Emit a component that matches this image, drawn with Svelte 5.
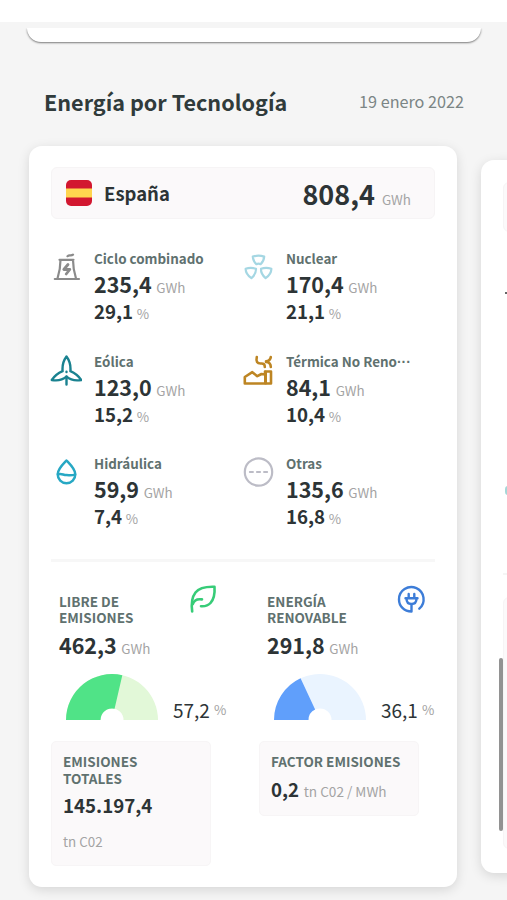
<script>
  const technologies = [
    { id: 'ciclo', name: 'Ciclo combinado', value: '235,4', share: '29,1' },
    { id: 'nuclear', name: 'Nuclear', value: '170,4', share: '21,1' },
    { id: 'eolica', name: 'Eólica', value: '123,0', share: '15,2' },
    { id: 'termica', name: 'Térmica No Reno', cut: true, value: '84,1', share: '10,4' },
    { id: 'hidraulica', name: 'Hidráulica', value: '59,9', share: '7,4' },
    { id: 'otras', name: 'Otras', value: '135,6', share: '16,8' }
  ];

  const summaries = [
    { id: 'libre', lines: ['LIBRE DE', 'EMISIONES'], value: '462,3', share: 57.2, color: '#50e387', track: '#e2f8d8' },
    { id: 'renovable', lines: ['ENERGÍA', 'RENOVABLE'], value: '291,8', share: 36.1, color: '#609ffb', track: '#eaf4ff' }
  ];

  // Half ring segment between two percentages, running left to right.
  function arc(from, to) {
    const point = (r, pct) => {
      const a = Math.PI * (1 - pct / 100);
      return `${(46 + r * Math.cos(a)).toFixed(2)} ${(46 - r * Math.sin(a)).toFixed(2)}`;
    };
    return `M${point(46, from)} A46 46 0 0 1 ${point(46, to)} L${point(11.5, to)} A11.5 11.5 0 0 0 ${point(11.5, from)} Z`;
  }

  const format = (n) => n.toFixed(1).replace('.', ',');
</script>

<div class="screen">
  <div class="status"></div>
  <div class="previous"></div>

  <header class="heading">
    <h1>Energía por Tecnología</h1>
    <span class="date">19 enero 2022</span>
  </header>

  <div class="carousel">
    <article class="card">
      <div class="country">
        <svg class="flag" viewBox="0 0 26 26">
          <rect width="26" height="26" rx="5" fill="#d21730" />
          <rect y="8.5" width="26" height="9" fill="#ffd54f" />
        </svg>
        <h2>España</h2>
        <strong>808,4</strong>
        <span class="unit">GWh</span>
      </div>

      <div class="techs">
        {#each technologies as tech}
          <div class="tech">
            <svg class="icon" viewBox="0 0 32 32" fill="none" stroke-width="2" stroke-linecap="round" stroke-linejoin="round">
              {#if tech.id === 'ciclo'}
                <g stroke="#8b8b8b" stroke-width="2.2">
                  <path d="M9.5 8.8h14M10.5 9c0 7-1 12-3 18.500M23 9c0 7 1 12 3 18.500M4.800 28h24.200" />
                  <path d="M18 13.500l-4.200 5h6l-3.600 4.500" stroke-width="2.800" />
                  <path d="M17.500 5.200c2-2 3.300.2 5.500-1.500" />
                </g>
              {:else if tech.id === 'nuclear'}
                <g stroke="#a5d7e3" stroke-width="2.200">
                  <path d="M10.800 5.600c3.800-1.200 7.600-1.200 11.400 0-.2 3.200-1.500 5.600-3.600 7.600-1.400-.8-2.800-.8-4.200 0-2.100-2-3.400-4.400-3.600-7.600z" />
                  <path d="M3.600 17.800c3.500-1.200 6.800-1.200 10.400 0 .2 3.800-1.600 6.800-4.600 9.400-3.600-2.400-5.700-5.400-5.800-9.400z" />
                  <path d="M19 17.800c3.500-1.200 6.800-1.200 10.400 0-.1 4-2.200 7-5.800 9.400-3-2.600-4.800-5.600-4.600-9.400z" />
                </g>
              {:else if tech.id === 'eolica'}
                <g stroke="#1a8290" stroke-width="2.400">
                  <path d="M16.500 2.500c-3 4-4.400 9-3.900 14.700C8.500 19 4.500 22 1.800 26c5.500 1 10.500.2 14.700-3.300 4.200 3.500 9.200 4.300 14.700 3.300-2.700-4-6.700-7-10.800-8.800.5-5.700-.9-10.700-3.900-14.700z" />
                  <path d="M16.500 17.800v.2M16.500 22.500v8" />
                </g>
              {:else if tech.id === 'termica'}
                <g stroke="#bd8523" stroke-width="2.600">
                  <path d="M2.800 29.500v-6.500l7.500-4.800 5 4 4.200-2.200 3.500.5v-3h6v12z" />
                  <path d="M23.500 18v11" stroke-width="3" />
                  <path d="M14.800 3c-1 4.500.3 6.700 4.200 6.500 3-.2 3.800 1 3.800 3.500M28.800 3c-.3 2.500-1.600 4-4.800 4.400M24 8c3.300.2 4.800 2 4.800 5" />
                </g>
              {:else if tech.id === 'hidraulica'}
                <g stroke="#27a8c4" stroke-width="2.500">
                  <path d="M16.500 4.500C12.200 9 7.700 13 7.700 18.300c0 5 3.800 8.900 8.800 8.900s8.800-3.900 8.800-8.900c0-5.300-4.500-9.300-8.800-13.800z" />
                  <path d="M8 18.300c4-1 5 .8 8.500.8s5 .4 8.500-.5" />
                </g>
              {:else}
                <g stroke="#bcbcc6" stroke-width="2.200">
                  <circle cx="16.500" cy="16" r="13.700" />
                  <path d="M7.800 16h3.200M14.900 16h3.200M22 16h3.200" stroke-width="1.900" />
                </g>
              {/if}
            </svg>
            <div class="figures">
              <h3>{tech.name}{#if tech.cut}<span class="dots">···</span>{/if}</h3>
              <p class="value"><strong>{tech.value}</strong> <span class="unit">GWh</span></p>
              <p class="share"><strong>{tech.share}</strong> <span class="unit">%</span></p>
            </div>
          </div>
        {/each}
      </div>

      <div class="summaries">
        {#each summaries as item}
          <section class="summary">
            <div class="summary-head">
              <h4>{item.lines[0]}<br />{item.lines[1]}</h4>
              {#if item.id === 'libre'}
                <svg class="badge" viewBox="0 0 30 30" fill="none" stroke="#37cc78" stroke-width="2.600" stroke-linecap="round" stroke-linejoin="round">
                  <path d="M3.200 27.500C2.200 20 3 13 6.500 8.500 10 4 17 2.500 25.500 2.800c.5 7-.5 12.200-4 16.200-2.500 2.800-5 3.500-9.500 3.200" />
                  <path d="M3.800 20c1.500-4.500 4.500-5.300 9.200-4.600" />
                </svg>
              {:else}
                <svg class="badge" viewBox="0 0 30 30" fill="none" stroke="#3d7dd8" stroke-width="2.400" stroke-linecap="round" stroke-linejoin="round">
                  <path d="M14.500 20.500v7C7 27.500 2 22 2 15.500a12.300 12.300 0 1 1 20.300 9.200" />
                  <path d="M8.500 14.300h12M9.500 14.500c0 4 1.500 5.500 5 5.500s5-1.500 5-5.500M11.700 10v4M17.300 10v4" />
                </svg>
              {/if}
            </div>
            <p class="value"><strong>{item.value}</strong> <span class="unit">GWh</span></p>
            <div class="gauge">
              <svg viewBox="0 0 92 46">
                <path d={arc(0, 100)} fill={item.track} />
                <path d={arc(0, item.share)} fill={item.color} />
              </svg>
              <span class="percent">{format(item.share)}</span>
              <span class="unit">%</span>
            </div>
          </section>
        {/each}
      </div>

      <div class="emissions">
        <section class="box total">
          <h4>EMISIONES<br />TOTALES</h4>
          <strong>145.197,4</strong>
          <p class="unit">tn C02</p>
        </section>
        <section class="box">
          <h4>FACTOR EMISIONES</h4>
          <p class="factor"><strong>0,2</strong> <span class="unit">tn C02 / MWh</span></p>
        </section>
      </div>
    </article>

    <article class="card next">
      <div class="peek-country"></div>
      <i class="peek-digit"></i>
      <i class="peek-icon"></i>
      <div class="peek-line"></div>
      <div class="peek-box"></div>
    </article>
  </div>

  <div class="scrollbar"></div>
</div>

<style>
  :global(body) {
    margin: 0;
    background: #f5f5f5;
  }

  .screen {
    position: relative;
    box-sizing: border-box;
    width: 507px;
    height: 900px;
    overflow: hidden;
    background: #f5f5f5;
    color: #2d3436;
    font-family: 'Noto Sans CJK SC', 'Noto Sans', sans-serif;
  }

  h1,
  h2,
  h3,
  h4,
  p {
    margin: 0;
  }

  svg {
    display: block;
    flex: none;
  }

  .status {
    height: 22px;
    margin-bottom: 6px;
    background: #fff;
  }

  .previous {
    width: 454px;
    height: 14px;
    margin-left: 27px;
    border-radius: 0 0 14px 14px;
    background: #fff;
    box-shadow: 0 1px 2px rgba(0, 0, 0, 0.5);
    clip-path: inset(0 -4px -5px);
  }

  .heading {
    display: flex;
    align-items: center;
    justify-content: space-between;
    height: 40px;
    margin-top: 40px;
    padding: 0 43px 0 44px;
  }

  h1 {
    color: #303b3b;
    font-size: 21.6px;
    line-height: 40px;
  }

  .date {
    position: relative;
    top: -1px;
    color: #7b8585;
    font-size: 16.2px;
    line-height: 40px;
  }

  .carousel {
    display: flex;
    gap: 24px;
    margin: 24px 0 0 29px;
  }

  .card {
    box-sizing: border-box;
    flex: none;
    width: 428px;
    height: 741px;
    padding: 21px 22px 0;
    border-radius: 13px;
    background: #fff;
    box-shadow: 0 3px 12px rgba(0, 0, 0, 0.13);
  }

  .country {
    display: flex;
    align-items: center;
    box-sizing: border-box;
    height: 52px;
    padding: 0 23px 0 14px;
    border: 1px solid #f6f4f5;
    border-radius: 6px;
    background: #fbf9fa;
  }

  .flag {
    width: 26px;
    height: 26px;
  }

  h2 {
    margin-left: 12px;
    font-size: 18.5px;
    line-height: 30px;
  }

  .country strong {
    margin: 2px 0 0 auto;
    font-size: 27px;
    line-height: 40px;
  }

  .unit {
    color: #a4a4a4;
    font-size: 13.4px;
  }

  .country .unit {
    margin: 12px 0 0 7px;
  }

  .techs {
    display: grid;
    grid-template-columns: 192px 192px;
    grid-auto-rows: 102.5px;
    margin-top: 29px;
  }

  .tech {
    display: flex;
    gap: 12px;
  }

  .icon {
    width: 32px;
    height: 32px;
    margin: 3px 0 0 -1px;
  }

  h3 {
    color: #60716f;
    font-size: 13.4px;
    line-height: 20px;
    white-space: nowrap;
  }

  .dots {
    font-family: 'Liberation Sans', sans-serif;
    font-size: 14px;
    line-height: 1;
  }

  .value {
    height: 32px;
    line-height: 32px;
    white-space: nowrap;
  }

  .value strong {
    font-size: 21.5px;
  }

  .share {
    height: 28px;
    margin-top: -3px;
    line-height: 28px;
  }

  .share strong {
    font-size: 18.7px;
  }

  .value .unit {
    margin-left: 1px;
  }

  .summaries {
    display: flex;
    box-sizing: border-box;
    height: 182.5px;
    margin-top: 3px;
    border-top: 3px solid #f7f7f7;
  }

  .summary {
    flex: none;
    width: 208px;
  }

  .summary-head {
    display: flex;
    justify-content: space-between;
    height: 67px;
    padding: 0 40px 0 8px;
  }

  h4 {
    color: #60716f;
    font-size: 13.5px;
    line-height: 16.5px;
    white-space: nowrap;
  }

  .summary h4 {
    margin-top: 31px;
  }

  .badge {
    width: 30px;
    height: 30px;
    margin-top: 22px;
  }

  .summary .value {
    padding-left: 8px;
  }

  .gauge {
    display: flex;
    align-items: flex-start;
    height: 46px;
    margin: 13px 0 0 15px;
  }

  .gauge svg {
    width: 92px;
    height: 46px;
  }

  .percent {
    margin: 22px 0 0 15px;
    font-size: 19px;
    line-height: 28px;
  }

  .gauge .unit {
    margin: 25px 0 0 4px;
    line-height: 20px;
  }

  .emissions {
    display: flex;
    align-items: flex-start;
    gap: 48px;
  }

  .box {
    box-sizing: border-box;
    width: 160px;
    height: 75px;
    padding: 11px 11px 0;
    border: 1px solid #f7f5f6;
    border-radius: 5px;
    background: #fbf9fa;
  }

  .total {
    height: 125px;
  }

  .total strong {
    display: block;
    margin-top: 3px;
    font-size: 18.7px;
    line-height: 32px;
  }

  .total .unit {
    margin-top: 9px;
    line-height: 22px;
  }

  .factor {
    margin-top: 4px;
    line-height: 30px;
    white-space: nowrap;
  }

  .factor strong {
    font-size: 18.7px;
  }

  .factor .unit {
    margin-left: 1px;
    font-size: 13.6px;
  }

  .next {
    display: flex;
    flex-direction: column;
    height: 713px;
    margin-top: 14px;
    padding-top: 22px;
  }

  .peek-country,
  .peek-box {
    flex: none;
    height: 48px;
    border: 1px solid #f6f4f5;
    border-radius: 6px;
    background: #fbf9fa;
  }

  .peek-digit {
    width: 6px;
    height: 2px;
    margin: 60px 0 0 2px;
    background: #666;
  }

  .peek-icon {
    width: 10px;
    height: 9px;
    margin: 192px 0 0 2px;
    border-radius: 3px;
    background: #a5d7d8;
  }

  .peek-line {
    height: 2px;
    margin-top: 78px;
    background: #f5f5f5;
  }

  .peek-box {
    height: 250px;
    margin-top: 22px;
  }

  .scrollbar {
    position: absolute;
    top: 658px;
    left: 499px;
    width: 4px;
    height: 173px;
    border-radius: 2px;
    background: #929292;
  }
</style>
